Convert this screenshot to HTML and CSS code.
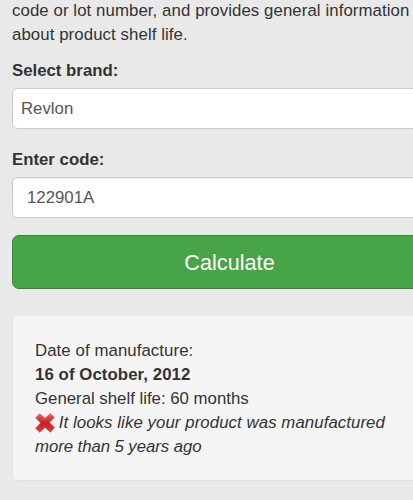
FILE: index.html
```html
<!DOCTYPE html>
<html lang="en">

<head>
  <meta charset="UTF-8">
  <meta name="viewport" content="width=device-width, initial-scale=1.0">
  <title>Cosmetic calculator</title>
  <link rel="stylesheet" href="styles.css">
</head>

<body>
  <div class="container">
    <p class="intro">code or lot number, and provides general information<br>about product shelf life.</p>

    <form>
      <div class="form-group">
        <label for="brand">Select brand:</label>
        <select id="brand" class="form-control">
          <option>Revlon</option>
        </select>
      </div>
      <div class="form-group">
        <label for="code">Enter code:</label>
        <input type="text" id="code" class="form-control code" value="122901A">
      </div>
      <button type="button" class="btn">Calculate</button>
    </form>

    <div class="well">
      <div class="made">Date of manufacture:</div>
      <div class="date">16 of October, 2012</div>
      <div class="life">General shelf life: 60 months</div>
      <div class="warning">
        <svg class="cross" viewBox="0 0 20 20">
          <defs>
            <linearGradient id="red" x1="0" y1="0" x2="0" y2="1">
              <stop offset="0" stop-color="#e06a66"></stop>
              <stop offset="0.5" stop-color="#c8201f"></stop>
              <stop offset="1" stop-color="#e23c39"></stop>
            </linearGradient>
          </defs>
          <path fill="url(#red)" stroke="#d2423f" stroke-width="0.8" stroke-linejoin="round" d="M4.6 .9 10 5.4 15.3 .8 19.2 4.4 14.4 9.6 19.4 14.6 15.4 19.2 9.9 14.4 4.7 19.3 .7 15.3 5.7 9.9 .8 4.9Z"></path>
        </svg>
        <em>It looks like your product was manufactured</em><br>
        <em class="ago">more than 5 years ago</em>
      </div>
    </div>
  </div>
</body>

</html>
```
FILE: styles.css
```css
* {
  box-sizing: border-box;
}

body {
  margin: 0;
  overflow: hidden;
  color: #333;
  background-color: #e9e9e9;
  font-family: "Liberation Sans", Arial, sans-serif;
  font-size: 16.8px;
  line-height: 24px;
}

.container {
  width: 446px;
  margin-top: -1px;
  padding-left: 12px;
}

.intro {
  margin: 0 0 12px;
  letter-spacing: 0.09px;
  white-space: nowrap;
}

.form-group {
  margin-bottom: 18px;
}

label {
  display: block;
  margin-bottom: 5px;
  font-weight: bold;
}

.form-control {
  display: block;
  width: 100%;
  height: 41px;
  padding: 0 8px;
  color: #555;
  font-family: inherit;
  font-size: 16.8px;
  line-height: 24px;
  border: 1px solid #ccc;
  border-radius: 5px;
  background-color: #fff;
  appearance: none;
}

.form-group + .form-group {
  margin-top: 19px;
  margin-bottom: 17px;
}

.code {
  padding: 0 14px;
  box-shadow: inset 0 1px 1px rgba(0, 0, 0, 0.075);
}

.btn {
  display: block;
  width: 100%;
  height: 54px;
  padding: 2px 0 0 1px;
  color: #fff;
  font-family: inherit;
  font-size: 21.6px;
  letter-spacing: 0.05px;
  border: 1px solid #398439;
  border-radius: 7px;
  background-color: #47a447;
}

.well {
  height: 167px;
  margin-top: 25px;
  padding: 24px 22px 20px;
  border: 1px solid #e3e3e3;
  border-radius: 5px;
  background-color: #f5f5f5;
  box-shadow: inset 0 1px 1px rgba(0, 0, 0, 0.05);
  white-space: nowrap;
}

.made,
.date,
.warning {
  letter-spacing: 0.08px;
}

.date {
  font-weight: bold;
}

.cross {
  width: 20px;
  height: 20px;
  margin-right: -1px;
  vertical-align: -5px;
}

.ago {
  letter-spacing: -0.07px;
}
```
